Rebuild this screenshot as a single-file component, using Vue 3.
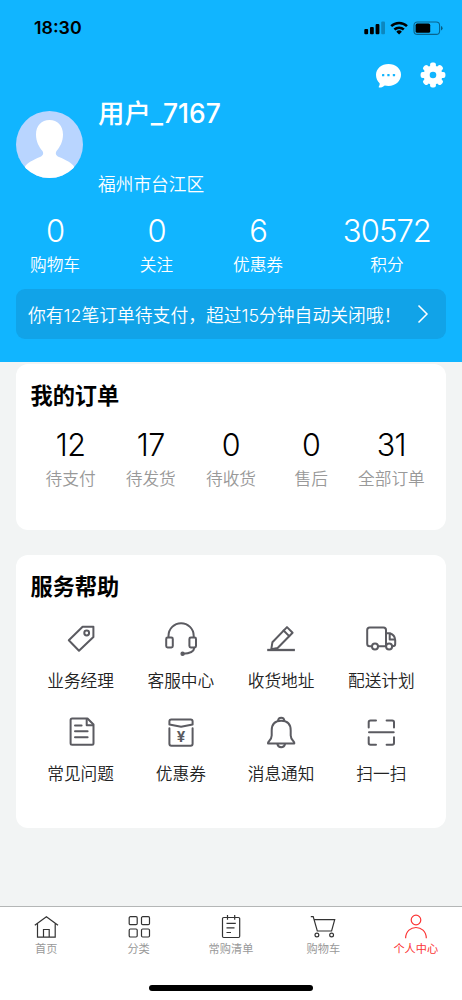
<script setup>
const stats = [
  { value: '0', label: '购物车' },
  { value: '0', label: '关注' },
  { value: '6', label: '优惠券' },
  { value: '30572', label: '积分' },
]
const orders = [
  { value: '12', label: '待支付' },
  { value: '17', label: '待发货' },
  { value: '0', label: '待收货' },
  { value: '0', label: '售后' },
  { value: '31', label: '全部订单' },
]
const services = [
  { icon: 'tag', label: '业务经理' },
  { icon: 'headset', label: '客服中心' },
  { icon: 'pencil', label: '收货地址' },
  { icon: 'truck', label: '配送计划' },
  { icon: 'doc', label: '常见问题' },
  { icon: 'coupon', label: '优惠券' },
  { icon: 'bell', label: '消息通知' },
  { icon: 'scan', label: '扫一扫' },
]
const tabs = [
  { icon: 'home', label: '首页' },
  { icon: 'grid', label: '分类' },
  { icon: 'list', label: '常购清单' },
  { icon: 'cart', label: '购物车' },
  { icon: 'me', label: '个人中心', active: true },
]
</script>

<template>
  <div class="page">
    <header class="header">
      <div class="status">
        <span class="time">18:30</span>
        <svg class="status-icons" width="80" height="16" viewBox="0 0 80 16">
          <rect x="1.300" y="9" width="3.800" height="5.200" rx="1" />
          <rect x="7" y="7" width="3.800" height="7.200" rx="1" />
          <rect x="12.600" y="4" width="3.800" height="10.200" rx="1" />
          <rect x="18.200" y="1.500" width="3.800" height="12.700" rx="1" opacity="0.25" />
          <g transform="translate(1 0)">
            <g fill="none" stroke="#000" stroke-width="2.500">
              <path d="M27.200 6.200a11.300 11.300 0 0 1 15.800 0" />
              <path d="M30.400 9.500a6.900 6.900 0 0 1 9.400 0" />
            </g>
            <path d="M32.300 11.700a4 4 0 0 1 5.600 0L35.100 14.500z" />
            <rect x="50" y="2" width="25.600" height="12.400" rx="3.400" fill="none" stroke="#000" stroke-opacity="0.45" stroke-width="1.100" />
            <rect x="51.600" y="3.600" width="14.600" height="9.200" rx="1.600" />
            <path d="M77 6v4.400q1.600-.6 1.600-2.200T77 6z" opacity="0.5" />
          </g>
        </svg>
      </div>
      <div class="actions">
        <svg width="28" height="28" viewBox="0 0 28 28">
          <path d="M14.500 3C21.500 3 27 7.600 27 13.800S21.500 25 14.500 25c-1.300 0-2.600-.2-3.800-.5-1.300 1.300-3.300 2.200-5.200 2.100-1-.1-1-.9-.5-1.400.6-.7.8-1.800.6-2.900C3.300 20.200 2 17.200 2 13.800 2 7.600 7.500 3 14.500 3z" fill="#fff" />
          <g fill="#11b5ff"><rect x="8" y="13" width="2.300" height="2.300" rx=".6" /><rect x="13.300" y="13" width="2.300" height="2.300" rx=".6" /><rect x="18.800" y="13" width="2.300" height="2.300" rx=".6" /></g>
        </svg>
        <svg width="28" height="28" viewBox="-14 -14 28 28">
          <g fill="#fff">
            <rect v-for="n in 4" :key="n" x="-2.900" y="-12.400" width="5.800" height="24.800" rx="2" :transform="`rotate(${n * 45})`" />
            <circle r="9.500" />
          </g>
          <circle r="3.300" fill="#11b5ff" />
        </svg>
      </div>
      <div class="profile">
        <svg class="avatar" width="67" height="67" viewBox="0 0 67 67">
          <defs><clipPath id="avatarClip"><circle cx="33.500" cy="33.500" r="33.500" /></clipPath></defs>
          <g clip-path="url(#avatarClip)">
            <rect width="67" height="67" fill="#b9d5ff" />
            <path d="M33.500 9C41.500 9 47 14.500 47 23.500c0 7-3 12.500-6.500 16.500-1.300 2.500-.8 4.500 2.500 6 7 2.800 13 6.300 15 9.500V67H9V55.500c2-3.200 8-6.700 15-9.500 3.300-1.500 3.800-3.500 2.500-6C23 36 20 30.500 20 23.500 20 14.500 25.500 9 33.500 9z" fill="#fff" />
          </g>
        </svg>
        <div>
          <h1 class="name">用户_7167</h1>
          <p class="addr">福州市台江区</p>
        </div>
      </div>
      <ul class="stats">
        <li v-for="s in stats" :key="s.label"><b>{{ s.value }}</b><span>{{ s.label }}</span></li>
      </ul>
      <div class="notice">
        <span>你有12笔订单待支付，超过15分钟自动关闭哦！</span>
        <svg width="12" height="20" viewBox="0 0 12 20"><path d="M1.500 1.500L10 10l-8.500 8.500" fill="none" stroke="#fff" stroke-width="1.500" /></svg>
      </div>
    </header>

    <section class="card orders-card">
      <h2>我的订单</h2>
      <ul class="orders">
        <li v-for="o in orders" :key="o.label"><b>{{ o.value }}</b><span>{{ o.label }}</span></li>
      </ul>
    </section>

    <section class="card service-card">
      <h2>服务帮助</h2>
      <ul class="services">
        <li v-for="s in services" :key="s.icon">
          <svg class="line" width="40" height="40" viewBox="0 0 40 40">
            <g v-if="s.icon === 'tag'">
              <path d="M7.800 21.300L21.600 7.700H32.400V18L18 31.700Z" /><circle cx="25.700" cy="14" r="2.400" />
            </g>
            <g v-else-if="s.icon === 'headset'">
              <rect x="5.200" y="18.500" width="6.600" height="10" rx="1.400" />
              <rect x="28.400" y="18.500" width="6.600" height="10" rx="1.400" />
              <path d="M7.500 18v-1.200a12.600 12.600 0 0 1 25.200 0V18M33.400 28.700c-.5 3.800-4 6-11.400 6" />
              <circle cx="21.600" cy="34.700" r="1.600" fill="#5b5b61" stroke-width="1.200" />
            </g>
            <g v-else-if="s.icon === 'pencil'">
              <path d="M10.300 30.200L11.400 23.300 26 8.100 31.600 13.700 16.600 29Z" /><path d="M22.600 11.500l5.600 5.600" />
              <path d="M6.200 31H33.900" stroke-width="2.300" stroke-linecap="butt" />
            </g>
            <g v-else-if="s.icon === 'truck'">
              <path d="M10.800 27.200H8.700Q6.200 27.200 6.200 24.700V10.900Q6.200 8.400 8.700 8.400H22.500Q25 8.400 25 10.900V27.200H17.200" />
              <path d="M25 14.300H29Q33.800 16 34.200 21V25Q34.200 27.200 31.400 27.200M28.700 15V20.400H34" />
              <circle cx="14" cy="27.600" r="3" fill="#fff" /><circle cx="28.100" cy="27.600" r="3" fill="#fff" />
            </g>
            <g v-else-if="s.icon === 'doc'">
              <path d="M11.100 6.500H26.500L32.500 12.500V31.300Q32.500 32.800 31 32.800H11.100Q9.600 32.800 9.600 31.300V8Q9.600 6.500 11.100 6.500Z" />
              <path d="M25.700 7V13.300H32M14 13.400H20.600M14 19.300H26.600M14 25.300H26.600" />
            </g>
            <g v-else-if="s.icon === 'coupon'">
              <path d="M10.300 7.400H29.700Q31.600 7.400 31.600 9.300V12.600L20.100 14.700 8.400 12.600V9.300Q8.400 7.400 10.300 7.400Z" />
              <path d="M8.400 16.300V31.800Q8.400 33.800 10.400 33.800H29.600Q31.600 33.800 31.600 31.800V16.300" />
              <text x="20.100" y="30.300" class="yen">¥</text>
            </g>
            <g v-else-if="s.icon === 'bell'">
              <path d="M7 31.500Q6.800 30.400 8 29.200 10.700 26.500 10.700 23.500V18.500Q10.700 8.800 20.200 8.800T29.700 18.500V23.500Q29.700 26.500 32.400 29.200 33.500 30.400 33.300 31.500Z" />
              <path d="M17 9.100Q17.200 5.800 20.200 5.800T23.400 9.100M16.400 32Q17 35.200 20.200 35.200T24 32" />
            </g>
            <g v-else>
              <path d="M7.700 15.500V10.300Q7.700 8.500 9.500 8.500H15M25.600 8.500H31.200Q33 8.500 33 10.300V15.500M7.700 25.200V31Q7.700 32.800 9.500 32.800H15M25.600 32.800H31.200Q33 32.800 33 31V25.200M8 20.300H32.700" />
            </g>
          </svg>
          <span>{{ s.label }}</span>
        </li>
      </ul>
    </section>

    <nav class="tabbar">
      <ul class="tabs">
        <li v-for="t in tabs" :key="t.icon" :class="{ active: t.active }">
          <svg width="30" height="30" viewBox="0 0 30 30">
            <path v-if="t.icon === 'home'" d="M3.800 13.300L15.400 4.700 27 13.300M6.500 11.500V25.200H24.200V11.500M12.500 25V17.500H18.200V25" />
            <g v-else-if="t.icon === 'grid'">
              <rect x="5.200" y="4.700" width="8" height="8" rx="1.200" /><rect x="17.500" y="4.700" width="8" height="8" rx="1.200" />
              <rect x="5.200" y="17" width="8" height="8" rx="1.200" /><rect x="17.500" y="17" width="8" height="8" rx="1.200" />
            </g>
            <path v-else-if="t.icon === 'list'" d="M9.500 5.500H7.700Q6.500 5.500 6.500 6.700V24.300Q6.500 25.500 7.700 25.500H22.500Q23.700 25.500 23.700 24.300V6.700Q23.700 5.500 22.500 5.500H9.500M11.500 3V7.700M18.700 3V7.700M10.500 11.300H19.800M10.500 15.800H18.500M10.500 20.500H15" />
            <g v-else-if="t.icon === 'cart'">
              <path d="M2.800 4.700H5.200L9.300 19H23.600L26.700 7.700H6.100" /><circle cx="8.900" cy="23" r="1.900" /><circle cx="23.600" cy="23" r="1.900" />
            </g>
            <g v-else><circle cx="15" cy="8" r="4.800" /><path d="M4.600 26.200C5 11.900 25 11.900 25.300 26.200" /></g>
          </svg>
          <span>{{ t.label }}</span>
        </li>
      </ul>
      <div class="home-indicator"></div>
    </nav>
  </div>
</template>

<style>
body { margin: 0; background: #f2f4f4; }
</style>

<style scoped>
.page {
  width: 462px;
  height: 1000px;
  display: flex;
  flex-direction: column;
  overflow: hidden;
  background: #f2f4f4;
  color: #000;
  font-family: Inter, "Noto Sans CJK SC", sans-serif;
}
h1, h2, p, ul { margin: 0; padding: 0; }
ul { list-style: none; }
svg { display: block; flex: none; }
.header { height: 362px; box-sizing: border-box; background: #11b5ff; color: #fff; flex: none; }
.status { display: flex; justify-content: space-between; align-items: center; height: 56px; padding: 0 19px 0 34px; }
.time { color: #000; font-size: 17.800px; font-weight: 600; line-height: 20px; }
.actions { display: flex; justify-content: flex-end; align-items: center; gap: 17px; height: 38px; padding-right: 15px; }
.profile { display: flex; gap: 15px; height: 118px; padding-left: 16px; }
.avatar { margin-top: 17px; }
.name { padding-top: 1px; font-size: 26.400px; line-height: 36px; font-weight: 500; }
.addr { margin-top: 42px; font-size: 17.700px; line-height: 24px; font-weight: 350; }
.stats { display: flex; justify-content: space-between; padding: 0 31px 0 30px; height: 77px; }
.stats li, .orders li, .services li, .tabs li { display: flex; flex-direction: column; align-items: center; white-space: nowrap; }
.stats b { font-size: 31px; line-height: 38px; font-weight: 300; letter-spacing: -0.900px; }
.stats span { margin-top: 3px; font-size: 16.700px; line-height: 24px; font-weight: 350; }
.notice { display: flex; justify-content: space-between; align-items: center; height: 50px; margin: 0 16px; padding: 0 17px 0 12px; box-sizing: border-box; border-radius: 9px; background: #11a3e8; font-size: 17.800px; font-weight: 350; white-space: nowrap; }
.card { flex: none; margin: 0 16px; padding: 0 14.500px; box-sizing: border-box; border-radius: 12px; background: #fff; }
.card h2 { font-size: 22.200px; line-height: 32px; font-weight: 600; }
.orders-card { height: 166px; margin-top: 2px; padding-top: 16px; }
.orders { display: grid; grid-template-columns: repeat(5, 1fr); margin-top: 14px; }
.orders b { font-size: 30.500px; line-height: 38px; font-weight: 350; letter-spacing: -0.500px; }
.orders span { margin-top: 3px; font-size: 16.700px; line-height: 24px; font-weight: 350; color: #999; }
.service-card { height: 273px; margin-top: 25px; padding-top: 16px; }
.services { display: grid; grid-template-columns: repeat(4, 1fr); grid-auto-rows: 93px; margin-top: 16px; }
.services span { margin-top: 10px; font-size: 16.700px; line-height: 24px; font-weight: 350; color: #222; }
.line { fill: none; stroke: #5b5b61; stroke-width: 2; stroke-linejoin: round; stroke-linecap: round; }
.yen { font: 700 15px Inter, sans-serif; text-anchor: middle; fill: #5b5b61; stroke: none; }
.tabbar { margin-top: auto; height: 94px; box-sizing: border-box; border-top: 1px solid #b4b6b6; padding-top: 5px; background: #fff; flex: none; }
.tabs { display: grid; grid-template-columns: repeat(5, 1fr); height: 73px; }
.tabs svg { fill: none; stroke: #333; stroke-width: 1.200; }
.tabs span { margin-top: -1px; font-size: 11.200px; line-height: 16px; color: #999; }
.tabs .active svg { stroke: #fb3434; }
.tabs .active span { color: #fb3434; }
.home-indicator { width: 164px; height: 6px; margin: 0 auto; border-radius: 3px; background: #000; }
</style>
